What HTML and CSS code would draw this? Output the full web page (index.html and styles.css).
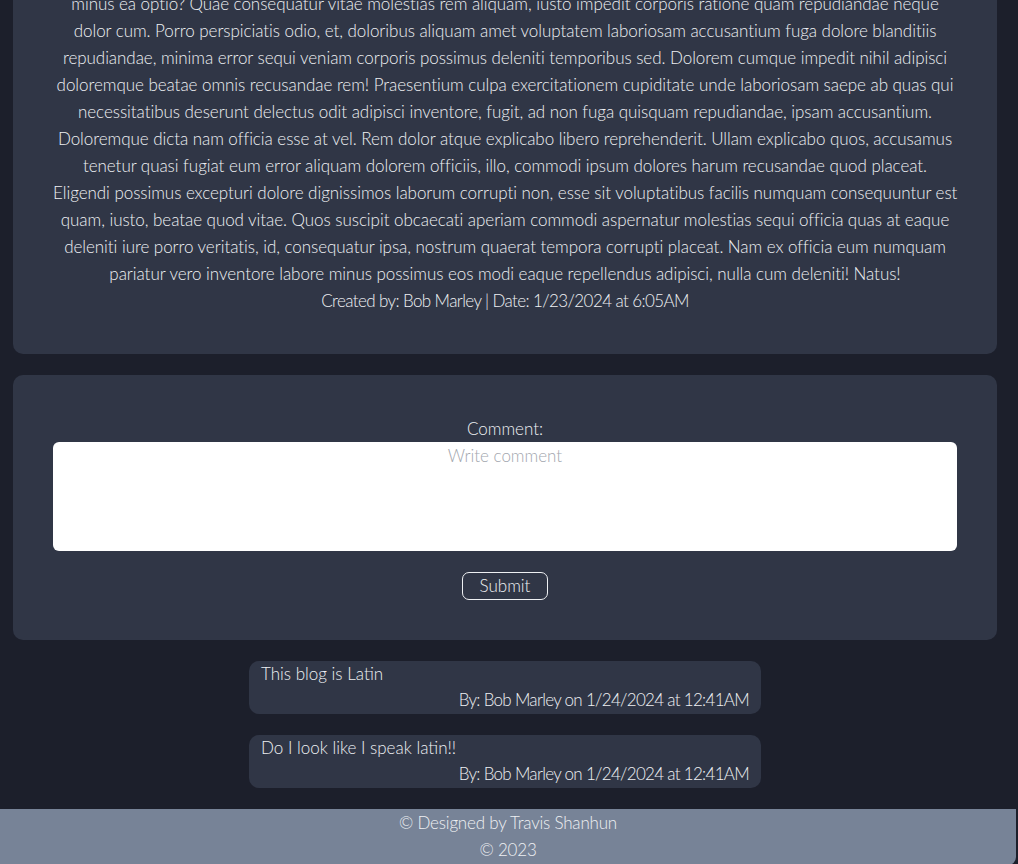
FILE: index.html
```html
<!DOCTYPE html>
<html lang="en">
<head>
<meta charset="utf-8">
<title>Blog</title>
<link rel="stylesheet" href="styles.css">
</head>
<body>
<main class="page">
  <section class="card post">
    <p class="post-body">minus ea optio? Quae consequatur vitae molestias rem aliquam, iusto impedit corporis ratione quam repudiandae neque<br>
dolor cum. Porro perspiciatis odio, et, doloribus aliquam amet voluptatem laboriosam accusantium fuga dolore blanditiis<br>
repudiandae, minima error sequi veniam corporis possimus deleniti temporibus sed. Dolorem cumque impedit nihil adipisci<br>
doloremque beatae omnis recusandae rem! Praesentium culpa exercitationem cupiditate unde laboriosam saepe ab quas qui<br>
necessitatibus deserunt delectus odit adipisci inventore, fugit, ad non fuga quisquam repudiandae, ipsam accusantium.<br>
Doloremque dicta nam officia esse at vel. Rem dolor atque explicabo libero reprehenderit. Ullam explicabo quos, accusamus<br>
tenetur quasi fugiat eum error aliquam dolorem officiis, illo, commodi ipsum dolores harum recusandae quod placeat.<br>
Eligendi possimus excepturi dolore dignissimos laborum corrupti non, esse sit voluptatibus facilis numquam consequuntur est<br>
quam, iusto, beatae quod vitae. Quos suscipit obcaecati aperiam commodi aspernatur molestias sequi officia quas at eaque<br>
deleniti iure porro veritatis, id, consequatur ipsa, nostrum quaerat tempora corrupti placeat. Nam ex officia eum numquam<br>
pariatur vero inventore labore minus possimus eos modi eaque repellendus adipisci, nulla cum deleniti! Natus!</p>
    <p class="post-meta">Created by: Bob Marley | Date: 1/23/2024 at 6:05AM</p>
  </section>

  <section class="card comment-form">
    <label class="comment-label" for="comment">Comment:</label>
    <textarea id="comment" class="comment-input" placeholder="Write comment"></textarea>
    <button class="submit-btn" type="button">Submit</button>
  </section>

  <section class="comments">
    <article class="comment">
      <p class="comment-text">This blog is Latin</p>
      <p class="comment-meta">By: Bob Marley on 1/24/2024 at 12:41AM</p>
    </article>
    <article class="comment">
      <p class="comment-text">Do I look like I speak latin!!</p>
      <p class="comment-meta">By: Bob Marley on 1/24/2024 at 12:41AM</p>
    </article>
  </section>
</main>
<footer class="footer">
  <p>© Designed by Travis Shanhun</p>
  <p>© 2023</p>
</footer>
</body>
</html>
```

FILE: styles.css
```css
* { box-sizing: border-box; }
html, body {
  margin: 0;
  padding: 0;
  background: #1c1f2b;
}
body {
  font-family: "Lato", "Liberation Sans", sans-serif;
  font-weight: 300;
  font-size: 17px;
  line-height: 27px;
  color: #eef0f3;
  overflow: hidden;
  height: 864px;
}
p { margin: 0; }

.page {
  display: flex;
  flex-direction: column;
  gap: 21px;
  padding: 0 21px 0 13px;
}

.card {
  background: #303646;
  border-radius: 10px;
  padding: 40px;
}

.post {
  margin-top: -50px;
  border-radius: 0 0 10px 10px;
  text-align: center;
}
.post-body {
  letter-spacing: -0.05px;
  white-space: nowrap;
}
.post-meta { letter-spacing: -0.6px; }

.comment-form {
  display: flex;
  flex-direction: column;
  align-items: center;
}
.comment-label { display: block; }
.comment-input {
  display: block;
  width: 100%;
  height: 109px;
  border: none;
  border-radius: 6px;
  background: #ffffff;
  resize: none;
  font-family: inherit;
  font-weight: 300;
  font-size: 17px;
  line-height: 27px;
  text-align: center;
  padding: 0 8px;
  margin: 0 0 21px;
  color: #333;
}
.comment-input::placeholder { color: #a2a6ae; }
.submit-btn {
  width: 86px;
  height: 28px;
  background: transparent;
  border: 1px solid #eef0f3;
  border-radius: 7px;
  color: #eef0f3;
  font-family: inherit;
  font-weight: 300;
  font-size: 17px;
  line-height: 24px;
  padding: 0;
}

.comments {
  display: flex;
  flex-direction: column;
  align-items: center;
  gap: 21px;
  padding-bottom: 21px;
}
.comment {
  width: 512px;
  background: #303646;
  border-radius: 10px;
  padding: 0 12px;
  height: 53px;
  line-height: 26px;
}
.comment-meta {
  text-align: right;
  letter-spacing: -0.7px;
}

.footer {
  background: #778397;
  color: #eef0f3;
  text-align: center;
  width: 1016px;
  border-radius: 0 0 8px 0;
  padding: 0 0 2px;
  letter-spacing: -0.2px;
}
```
